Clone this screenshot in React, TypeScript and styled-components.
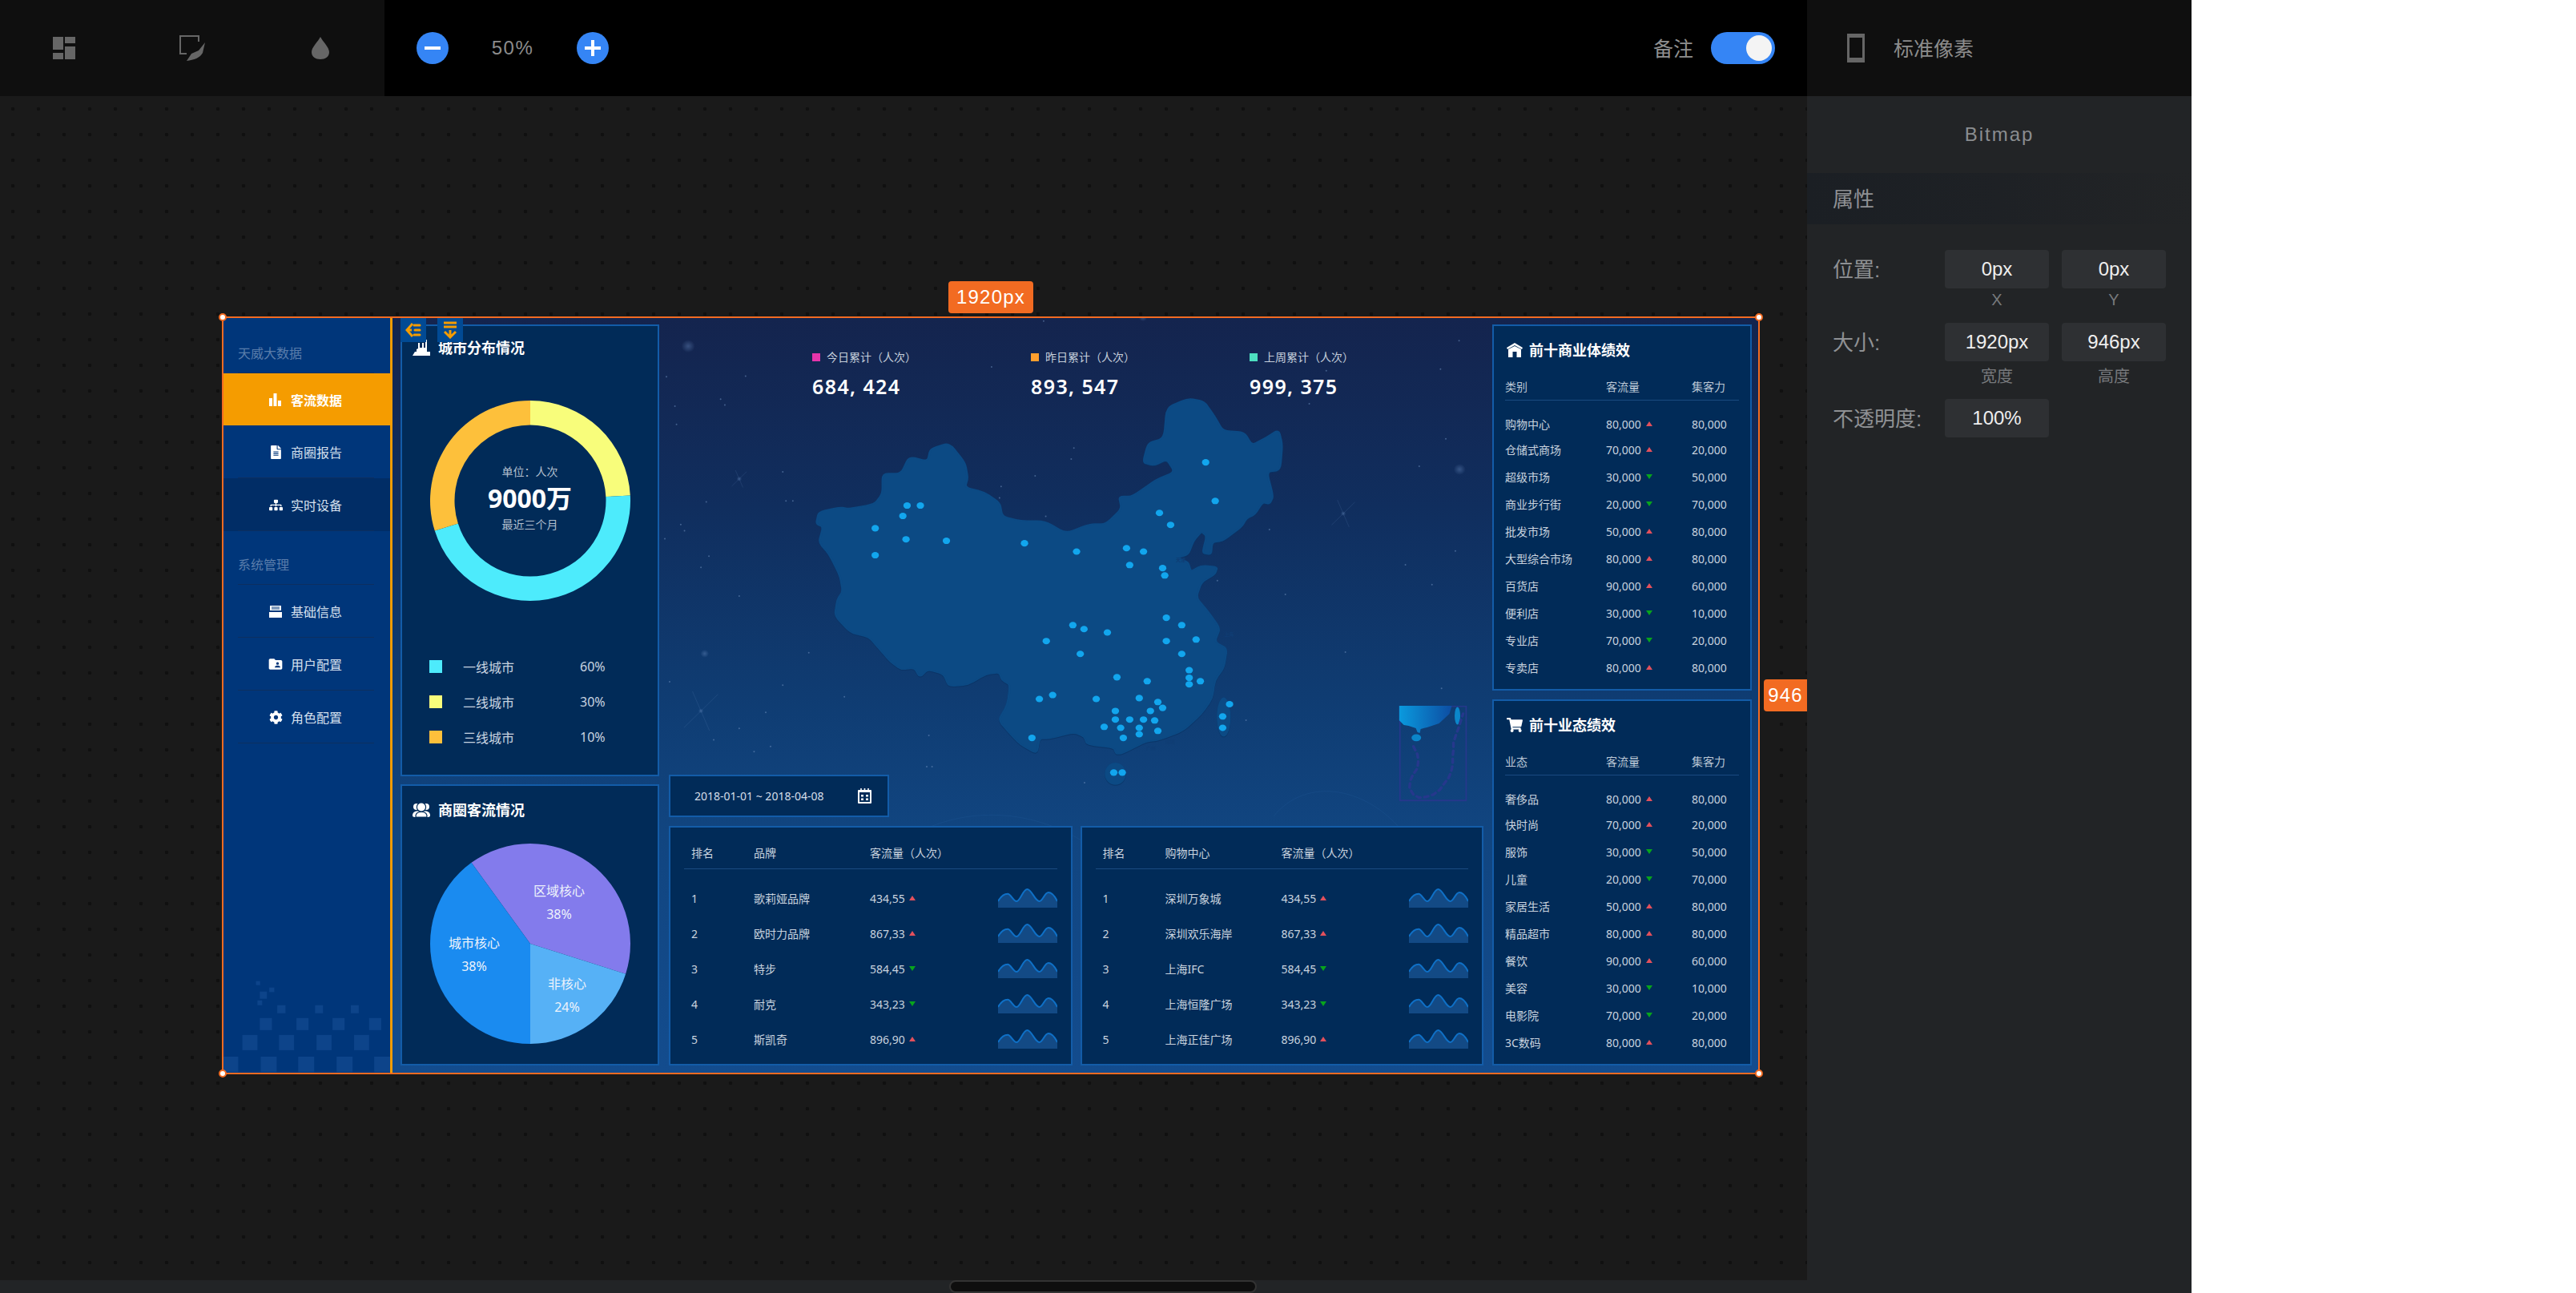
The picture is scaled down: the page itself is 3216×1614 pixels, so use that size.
import React from "react";
import styled, { createGlobalStyle } from "styled-components";
import { FaFileAlt, FaSitemap, FaCog, FaShoppingCart } from "react-icons/fa";
import { MdFolderShared } from "react-icons/md";

const UI_FONT = `"Liberation Sans", "Noto Sans CJK SC", sans-serif`;
const BOARD_FONT = `"Noto Sans", "Noto Sans CJK SC", sans-serif`;
const ORANGE = "#f26b22";
const AMBER = "#f59c00";

const Global = createGlobalStyle`
  html, body { margin: 0; padding: 0; background: #fff; overflow: hidden; }
  * { box-sizing: border-box; }
`;

const Shell = styled.div`
  display: flex;
  width: 2736px;
  height: 1614px;
  font-family: ${UI_FONT};
`;
const LeftCol = styled.div`
  width: 2256px;
  display: flex;
  flex-direction: column;
  background: #222426;
`;
const RightCol = styled.div`
  width: 480px;
  display: flex;
  flex-direction: column;
  background: #222426;
`;
const Topbar = styled.header`
  height: 120px;
  flex: none;
  display: flex;
  background: #000;
`;
const ToolGroup = styled.div`
  width: 480px;
  display: flex;
  background: #0f0f0f;
`;
const ToolSlot = styled.div`
  width: 160px;
  display: flex;
  align-items: center;
  justify-content: center;
  svg { display: block; }
`;
const ZoomGroup = styled.div`
  display: flex;
  align-items: center;
  padding-left: 40px;
`;
const RoundButton = styled.div<{ $plus?: boolean }>`
  width: 40px;
  height: 40px;
  border-radius: 50%;
  background: #3585f5;
  position: relative;
  &::before {
    content: "";
    position: absolute;
    left: 10px;
    top: 18px;
    width: 20px;
    height: 4px;
    background: #fff;
  }
  &::after {
    content: "";
    position: absolute;
    left: 18px;
    top: 10px;
    width: 4px;
    height: 20px;
    background: #fff;
    display: ${(p) => (p.$plus ? "block" : "none")};
  }
`;
const ZoomValue = styled.div`
  width: 160px;
  text-align: center;
  font-size: 24px;
  letter-spacing: 1.5px;
  color: #8c8c8c;
`;
const NoteGroup = styled.div`
  margin-left: auto;
  display: flex;
  align-items: center;
  gap: 22px;
  padding-right: 40px;
`;
const NoteLabel = styled.span`
  font-size: 25px;
  color: #8f8f8f;
  padding-bottom: 3px;
`;
const Toggle = styled.div`
  width: 80px;
  height: 40px;
  border-radius: 20px;
  background: #3585f5;
  display: flex;
  align-items: center;
  justify-content: flex-end;
  padding-right: 4px;
`;
const Knob = styled.div`
  width: 32px;
  height: 32px;
  border-radius: 50%;
  background: #f4f4f4;
`;
const Canvas = styled.main`
  height: 1478px;
  flex: none;
  position: relative;
  overflow: hidden;
  background-color: #1a1a1a;
  background-image: radial-gradient(circle at 16px 16px, #101010 0, #101010 2px, transparent 2.6px);
  background-size: 32px 32px;
`;
const ScrollTrack = styled.div`
  flex: 1;
  display: flex;
  padding-left: 1185px;
  align-items: center;
`;
const ScrollThumb = styled.div`
  width: 384px;
  height: 16px;
  border-radius: 8px;
  background: #0e0e0e;
  border: 2px solid #333;
`;
const Stage = styled.section`
  position: absolute;
  left: 277px;
  top: 275px;
  width: 1920px;
  height: 946px;
  border: 2px solid ${ORANGE};
  display: flex;
  font-family: ${BOARD_FONT};
`;
const Handle = styled.span<{ $x: string; $y: string }>`
  position: absolute;
  width: 10px;
  height: 10px;
  border-radius: 50%;
  background: #fff;
  border: 2px solid ${ORANGE};
  z-index: 5;
  ${(p) => p.$x}: -6px;
  ${(p) => p.$y}: -6px;
`;
const SizeTag = styled.div<{ $left: number; $top: number; $w: number; $r: string }>`
  position: absolute;
  z-index: 5;
  left: ${(p) => p.$left}px;
  top: ${(p) => p.$top}px;
  width: ${(p) => p.$w}px;
  height: 40px;
  border-radius: ${(p) => p.$r};
  background: ${ORANGE};
  color: #fff;
  font-family: "Liberation Sans", sans-serif;
  font-size: 24px;
  letter-spacing: 1.2px;
  line-height: 40px;
  text-align: center;
`;
const LayerTag = styled.div<{ $left: number }>`
  position: absolute;
  z-index: 4;
  top: 0;
  left: ${(p) => p.$left}px;
  width: 32px;
  height: 30px;
  background: #014a94;
  display: flex;
  align-items: center;
  justify-content: center;
`;
const Sidebar = styled.nav`
  width: 211px;
  flex: none;
  position: relative;
  background: #00367a;
  border-right: 3px solid ${AMBER};
`;
const SideTitle = styled.div<{ $h: number }>`
  height: ${(p) => p.$h}px;
  display: flex;
  align-items: flex-end;
  padding: 0 0 14px 18px;
  font-size: 16px;
  line-height: 22px;
  color: #5a7dab;
  position: relative;
  &::after {
    content: "";
    position: absolute;
    left: 18px;
    bottom: 0;
    width: 170px;
    height: 1px;
    background: #0d2f5f;
  }
`;
const SideItem = styled.div<{ $active?: boolean; $dark?: boolean; $h?: number }>`
  height: ${(p) => p.$h ?? 66}px;
  display: flex;
  align-items: center;
  gap: 10px;
  padding-left: 56px;
  position: relative;
  font-size: 16px;
  font-weight: ${(p) => (p.$active ? 700 : 400)};
  color: ${(p) => (p.$active ? "#fff" : "#d6e0ee")};
  background: ${(p) => (p.$active ? AMBER : p.$dark ? "#012d66" : "transparent")};
  &::after {
    content: "";
    position: absolute;
    left: 18px;
    bottom: 0;
    width: 170px;
    height: 1px;
    background: #0d2f5f;
    display: ${(p) => (p.$active ? "none" : "block")};
  }
`;
const SideIcon = styled.span`
  width: 18px;
  height: 18px;
  display: flex;
  align-items: center;
  justify-content: center;
  color: #fff;
  font-size: 17px;
`;
const FolderGlyph = styled(MdFolderShared)`
  font-size: 20px;
  flex: none;
`;
const SidePixels = styled.svg`
  position: absolute;
  left: 0;
  bottom: 0;
  width: 208px;
  height: 117px;
`;
const Board = styled.div`
  flex: 1;
  min-width: 0;
  position: relative;
  overflow: hidden;
  background: linear-gradient(180deg, #14244e 0%, #102e5e 25%, #0f3c72 50%, #114580 68%, #134c8e 100%);
  display: grid;
  grid-template-columns: 323px 1017px 324px;
  column-gap: 12px;
  padding: 8px 0 9px 10px;
`;
const Backdrop = styled.svg`
  position: absolute;
  left: 340px;
  top: -7px;
  width: 1040px;
  height: 600px;
  overflow: visible;
`;
const Streaks = styled.svg`
  position: absolute;
  left: 340px;
  bottom: 0;
  width: 1040px;
  height: 360px;
`;
const Column = styled.div<{ $gap: number }>`
  position: relative;
  min-height: 0;
  display: flex;
  flex-direction: column;
  gap: ${(p) => p.$gap}px;
`;
const SideColumn = styled(Column)`
  width: 324px;
  margin-left: -1px;
`;
const Panel = styled.div`
  background: #012b58;
  border: 2px solid #135ca8;
`;
const CityPanel = styled(Panel)`
  height: 564px;
  padding: 15px 0 0;
`;
const MallPanel = styled(Panel)`
  flex: 1;
  padding: 18px 0 0;
`;
const PanelTitle = styled.h2<{ $pad?: number; $gap?: number }>`
  margin: 0;
  display: flex;
  align-items: center;
  gap: ${(p) => p.$gap ?? 10}px;
  padding-left: ${(p) => p.$pad ?? 13}px;
  font-size: 18px;
  line-height: 24px;
  font-weight: 700;
  color: #fff;
  svg { flex: none; display: block; }
`;
const DonutWrap = styled.div`
  position: relative;
  width: 250px;
  height: 250px;
  margin: 54px auto 0;
  svg { display: block; }
`;
const DonutCenter = styled.div`
  position: absolute;
  inset: 0;
  display: flex;
  flex-direction: column;
  align-items: center;
  justify-content: center;
  padding-bottom: 6px;
  color: #b4c0cf;
  font-size: 14px;
  line-height: 20px;
`;
const DonutValue = styled.div`
  font-size: 32px;
  line-height: 40px;
  font-weight: 700;
  color: #fff;
  margin: 3px 0 3px;
`;
const Legend = styled.div`
  margin-top: 60px;
  padding-left: 34px;
`;
const LegendRow = styled.div`
  height: 44px;
  display: flex;
  align-items: center;
  font-size: 16px;
  color: #c9d4e0;
`;
const Swatch = styled.i<{ $c: string }>`
  width: 16px;
  height: 16px;
  margin-right: 26px;
  background: ${(p) => p.$c};
`;
const LegendName = styled.span`
  width: 146px;
`;
const PieBox = styled.div`
  width: 250px;
  margin: 30px auto 0;
  svg { display: block; overflow: visible; }
`;
const PieText = styled.text`
  font-family: ${BOARD_FONT};
  font-size: 16px;
  fill: #eef3fb;
  text-anchor: middle;
  dominant-baseline: central;
`;
const MapTop = styled.div`
  flex: 1;
  min-height: 0;
`;
const Stats = styled.div`
  display: flex;
  padding: 33px 0 0 179px;
`;
const Stat = styled.div`
  width: 273px;
`;
const StatLabel = styled.div`
  display: flex;
  align-items: center;
  gap: 8px;
  font-size: 14px;
  line-height: 16px;
  color: #c6d0dc;
`;
const StatDot = styled.i<{ $c: string }>`
  width: 10px;
  height: 10px;
  background: ${(p) => p.$c};
`;
const StatValue = styled.div`
  margin-top: 12px;
  font-size: 25px;
  line-height: 32px;
  font-weight: 600;
  letter-spacing: 1.4px;
  color: #fff;
`;
const DatePanel = styled(Panel)`
  width: 275px;
  height: 53px;
  flex: none;
  display: flex;
  align-items: center;
  justify-content: space-between;
  padding: 0 20px 0 30px;
  font-size: 14px;
  color: #d6dee8;
  svg { display: block; }
`;
const TableGrid = styled.div`
  height: 299px;
  flex: none;
  display: grid;
  grid-template-columns: 1fr 1fr;
  column-gap: 10px;
`;
const RankPanel = styled(Panel)`
  padding: 21px 17px 0;
`;
const RankRow = styled.div<{ $head?: boolean }>`
  display: grid;
  grid-template-columns: 78px 145px 1fr 74px;
  align-items: center;
  padding-left: 9px;
  height: ${(p) => (p.$head ? "31px" : "44px")};
  font-size: 14px;
  color: #c9d3df;
  ${(p) => (p.$head ? "border-bottom: 1px solid #1a4a80; padding-bottom: 10px; margin-bottom: 14px;" : "")}
`;
const Flow = styled.span`
  display: flex;
  align-items: center;
  gap: 5px;
`;
const Trend = styled.i<{ $up: boolean }>`
  width: 0;
  height: 0;
  border-left: 4.5px solid transparent;
  border-right: 4.5px solid transparent;
  ${(p) => (p.$up ? "border-bottom: 6px solid #e2505c;" : "border-top: 6px solid #08a41c;")}
`;
const Spark = styled.svg`
  width: 74px;
  height: 24px;
  display: block;
`;
const TopPanel = styled(Panel)`
  height: 457px;
  padding: 18px 14px 0;
`;
const TopHead = styled.div`
  display: grid;
  grid-template-columns: 126px 107px 1fr;
  align-items: center;
  height: 27px;
  margin-top: 24px;
  padding-bottom: 7px;
  border-bottom: 1px solid #1a4a80;
  margin-bottom: 14px;
  font-size: 14px;
  line-height: 20px;
  color: #bcc8d6;
`;
const TopRow = styled.div`
  display: grid;
  grid-template-columns: 126px 107px 1fr;
  align-items: center;
  height: 34px;
  font-size: 14px;
  color: #c9d3df;
  &:nth-of-type(2) { height: 30px; }
`;
const TopFlow = styled(Flow)`
  gap: 6px;
`;
const RightHead = styled.div`
  height: 120px;
  flex: none;
  background: #0f0f0f;
  display: flex;
  align-items: center;
  padding-left: 50px;
  gap: 36px;
  color: #8c8c8c;
  font-size: 25px;
  svg { display: block; }
`;
const HeadText = styled.span`
  padding-bottom: 3px;
`;
const Bitmap = styled.div`
  height: 96px;
  flex: none;
  display: flex;
  align-items: center;
  justify-content: center;
  font-size: 24px;
  letter-spacing: 2px;
  color: #8a8d90;
`;
const SectionBar = styled.div`
  height: 64px;
  flex: none;
  display: flex;
  align-items: center;
  padding: 0 0 3px 32px;
  font-size: 26px;
  color: #8f9194;
  background: linear-gradient(90deg, #1b1f24 0%, #1e2125 50%, #222426 100%);
`;
const Props = styled.div`
  padding: 32px 32px 0;
`;
const PropRow = styled.div`
  display: grid;
  column-gap: 16px;
  width: 432px;
  grid-template-columns: 124px 130px 130px;
  align-items: center;
`;
const PropLabel = styled.div`
  font-size: 26px;
  color: #8f9194;
  white-space: nowrap;
  padding-bottom: 3px;
`;
const PropField = styled.div`
  height: 48px;
  border-radius: 4px;
  background: #2e3033;
  color: #eee;
  font-size: 24px;
  line-height: 48px;
  text-align: center;
`;
const SubRow = styled(PropRow)<{ $after: number; $before: number }>`
  margin-top: ${(p) => p.$before}px;
  margin-bottom: ${(p) => p.$after}px;
`;
const SubLabel = styled.div`
  font-size: 20px;
  line-height: 28px;
  color: #77797c;
  text-align: center;
`;

function polar(cx: number, cy: number, r: number, deg: number) {
  const a = (deg * Math.PI) / 180;
  return [cx + r * Math.sin(a), cy - r * Math.cos(a)];
}
function ring(cx: number, cy: number, r1: number, r0: number, a0: number, a1: number) {
  const large = a1 - a0 > 180 ? 1 : 0;
  const [x0, y0] = polar(cx, cy, r1, a0);
  const [x1, y1] = polar(cx, cy, r1, a1);
  if (r0 === 0) return `M${cx} ${cy}L${x0} ${y0}A${r1} ${r1} 0 ${large} 1 ${x1} ${y1}Z`;
  const [x2, y2] = polar(cx, cy, r0, a1);
  const [x3, y3] = polar(cx, cy, r0, a0);
  return `M${x0} ${y0}A${r1} ${r1} 0 ${large} 1 ${x1} ${y1}L${x2} ${y2}A${r0} ${r0} 0 ${large} 0 ${x3} ${y3}Z`;
}

const CHINA =
  "985,280 1015,290 1035,340 1050,385 1090,390 1105,432 1130,410 1155,382 1162,430 1158,515 1133,520 1145,600 1138,625 1125,620 1110,660 1095,672 1085,700 1050,745 1030,750 1028,790 1012,785 1020,730 1010,715 995,745 985,790 965,800 985,815 990,845 1010,825 1040,830 1035,855 1010,880 1000,930 1020,970 1045,1030 1035,1075 1058,1095 1052,1160 1035,1200 1030,1260 1010,1310 975,1365 930,1395 905,1400 860,1440 850,1440 845,1420 795,1410 790,1385 770,1370 725,1390 705,1390 700,1440 670,1410 650,1375 628,1330 645,1280 650,1215 635,1200 630,1175 605,1180 570,1215 535,1220 525,1180 495,1165 480,1190 470,1160 445,1165 425,1140 405,1100 385,1060 350,1045 320,990 325,935 335,910 330,860 310,790 290,750 298,700 285,690 290,650 330,635 345,640 395,625 410,590 410,525 445,525 460,470 495,485 500,445 535,425 565,490 570,540 565,570 600,585 630,620 635,665 670,680 715,680 755,720 800,690 830,690 860,640 855,600 880,600 925,545 960,520 945,480 920,500 900,490 910,425 940,410 945,310";

function roundedOutline(src: string, k = 0.3) {
  const pts = src.split(" ").map((s) => s.split(",").map(Number));
  const lerp = (a: number[], b: number[], t: number) => [a[0] + (b[0] - a[0]) * t, a[1] + (b[1] - a[1]) * t];
  let d = "";
  pts.forEach((p, i) => {
    const prev = pts[(i - 1 + pts.length) % pts.length];
    const next = pts[(i + 1) % pts.length];
    const a = lerp(p, prev, k);
    const b = lerp(p, next, k);
    d += `${i === 0 ? "M" : "L"}${a[0]} ${a[1]}Q${p[0]} ${p[1]} ${b[0]} ${b[1]}`;
  });
  return d + "Z";
}

const CITY_DOTS: [number, number][] = [
  [1018,489],[1036,615],[931,654],[952,693],[456,630],[481,630],[448,664],[396,704],[454,740],[530,745],[396,792],[677,753],[775,780],[869,769],[901,780],[875,824],[937,834],[941,858],[944,996],[973,1020],[768,1020],[789,1033],[833,1044],[718,1072],[944,1072],[1000,1067],[782,1114],[973,1114],[987,1167],[987,1192],[1008,1203],[987,1213],[851,1190],[908,1203],[730,1248],[705,1261],[812,1261],[893,1258],[928,1271],[937,1290],[914,1300],[848,1300],[848,1328],[875,1328],[901,1328],[922,1331],[827,1352],[858,1355],[893,1355],[893,1376],[928,1365],[863,1388],[691,1388],[1063,1278],[1050,1318],[1050,1355],[845,1501],[861,1501],
];
const SPECKS: [number, number][] = [
  [713,28],[900,14],[3,210],[152,208],[615,178],[1460,185],[1495,92],[1245,190],[1213,298],[105,283],[113,302],[19,306],[22,365],[222,520],[697,533],[633,568],[228,615],[241,615],[78,618],[30,692],[37,712],[0,738],[83,795],[68,832],[140,925],[1138,708],[1470,412],[1420,502],[1488,778],[1394,823],[1444,888],[1168,920],[1040,875],[1281,1108],[1094,1330],[1462,1226],[271,1110],[9,1205],[222,1216],[338,1254],[190,1305],[140,1357],[497,1380],[493,1482],[503,1482],[199,1416],[168,1433],[92,1394],[790,1534],[717,665],[630,605],[765,478],[770,442],
];
const GLOWS: [number, number, number][] = [[44,110,8],[1496,512,7],[75,1113,5],[900,16,5]];
const SPARKS: [number, number, number][] = [[140,543,14],[1277,656,22],[68,1300,32]];
const PIXELS: number[][] = [
  [50,1080,50,58],[176,1080,54,58],[303,1080,54,58],[433,1080,54,58],[560,1080,54,58],
  [114,999,51,57],[238,999,51,57],[365,999,51,57],[492,999,51,57],
  [173,936,41,45],[297,936,41,45],[419,936,41,45],[543,936,41,45],
  [232,888,28,30],[360,888,27,30],[481,888,27,30],
  [160,798,14,15],[205,822,17,17],[173,837,24,27],[165,870,16,18],
];
const MAP_LABELS: [string, number, number][] = [["天津",972,812],["上海",1063,1056],["台北",1083,1276],["广州",916,1428],["深圳",952,1406]];

const MapLabel = styled.text`
  font-family: ${BOARD_FONT};
  font-size: 6px;
  font-weight: 700;
  fill: #0f3d74;
`;

const SparkLine = () => (
  <Spark viewBox="0 0 74 24">
    <path
      d="M0 16C4 9 8 6.7 12 6.7C16 6.7 19 16 23 16C28 16 31 1 36.5 1C42 1 46 16 51.7 16C56 16 58 5 63 5C68 5 71 10 74 16V24H0Z"
      fill="#134a85"
    />
    <path
      d="M0 16C4 9 8 6.7 12 6.7C16 6.7 19 16 23 16C28 16 31 1 36.5 1C42 1 46 16 51.7 16C56 16 58 5 63 5C68 5 71 10 74 16"
      fill="none"
      stroke="#0f70c6"
      strokeWidth="2"
    />
  </Spark>
);

const BRANDS: [string, string, boolean][] = [
  ["歌莉娅品牌", "434,55", true],
  ["欧时力品牌", "867,33", true],
  ["特步", "584,45", false],
  ["耐克", "343,23", false],
  ["斯凯奇", "896,90", true],
];
const MALLS = ["深圳万象城", "深圳欢乐海岸", "上海IFC", "上海恒隆广场", "上海正佳广场"];

const NUMBERS: [string, boolean, string][] = [
  ["80,000", true, "80,000"],
  ["70,000", true, "20,000"],
  ["30,000", false, "50,000"],
  ["20,000", false, "70,000"],
  ["50,000", true, "80,000"],
  ["80,000", true, "80,000"],
  ["90,000", true, "60,000"],
  ["30,000", false, "10,000"],
  ["70,000", false, "20,000"],
  ["80,000", true, "80,000"],
];
const VENUES = ["购物中心", "仓储式商场", "超级市场", "商业步行街", "批发市场", "大型综合市场", "百货店", "便利店", "专业店", "专卖店"];
const FORMATS = ["奢侈品", "快时尚", "服饰", "儿童", "家居生活", "精品超市", "餐饮", "美容", "电影院", "3C数码"];

const RankTable = ({ col, names }: { col: string; names: string[] }) => (
  <RankPanel>
    <RankRow $head>
      <span>排名</span>
      <span>{col}</span>
      <span>客流量（人次）</span>
      <span />
    </RankRow>
    {names.map((n, i) => (
      <RankRow key={n}>
        <span>{i + 1}</span>
        <span>{n}</span>
        <Flow>
          {BRANDS[i][1]}
          <Trend $up={BRANDS[i][2]} />
        </Flow>
        <SparkLine />
      </RankRow>
    ))}
  </RankPanel>
);

const TopTable = ({ icon, title, col, names }: { icon: React.ReactNode; title: string; col: string; names: string[] }) => (
  <TopPanel>
    <PanelTitle $pad={2} $gap={8}>
      {icon}
      {title}
    </PanelTitle>
    <TopHead>
      <span>{col}</span>
      <span>客流量</span>
      <span>集客力</span>
    </TopHead>
    {names.map((n, i) => (
      <TopRow key={n}>
        <span>{n}</span>
        <TopFlow>
          {NUMBERS[i][0]}
          <Trend $up={NUMBERS[i][1]} />
        </TopFlow>
        <span>{NUMBERS[i][2]}</span>
      </TopRow>
    ))}
  </TopPanel>
);

export default function App() {
  return (
    <Shell>
      <Global />
      <LeftCol>
        <Topbar>
          <ToolGroup>
            <ToolSlot>
              <svg width="28" height="28" viewBox="0 0 28 28" fill="#666">
                <rect x="0" y="0" width="13" height="16" />
                <rect x="15" y="0" width="13" height="8" />
                <rect x="0" y="20" width="13" height="8" />
                <rect x="15" y="12" width="13" height="16" />
              </svg>
            </ToolSlot>
            <ToolSlot>
              <svg width="32" height="32" viewBox="0 0 32 32">
                <path d="M24 8V1H1V23H9" fill="none" stroke="#666" strokeWidth="2" />
                <path d="M32 9L29 22C26 28 18 31 9 32L15 23L24 19Z" fill="#666" />
              </svg>
            </ToolSlot>
            <ToolSlot>
              <svg width="22" height="28" viewBox="0 0 22 28">
                <path d="M11 0C8 6 0 13 0 19C0 25 5 28 11 28C17 28 22 25 22 19C22 13 14 6 11 0Z" fill="#666" />
              </svg>
            </ToolSlot>
          </ToolGroup>
          <ZoomGroup>
            <RoundButton />
            <ZoomValue>50%</ZoomValue>
            <RoundButton $plus />
          </ZoomGroup>
          <NoteGroup>
            <NoteLabel>备注</NoteLabel>
            <Toggle>
              <Knob />
            </Toggle>
          </NoteGroup>
        </Topbar>
        <Canvas>
          <Stage>
            <Handle $x="left" $y="top" />
            <Handle $x="right" $y="top" />
            <Handle $x="left" $y="bottom" />
            <Handle $x="right" $y="bottom" />
            <SizeTag $left={905} $top={-46} $w={106} $r="4px">1920px</SizeTag>
            <SizeTag $left={1923} $top={451} $w={54} $r="4px 0 0 4px">946</SizeTag>
            <LayerTag $left={221}>
              <svg width="20" height="20" viewBox="0 0 20 20" fill="none" stroke={AMBER} strokeWidth="3">
                <path d="M9 2L2 10L9 18M2 10H8" />
                <path d="M11 4H18M12 10H18M11 16H18" strokeLinecap="round" />
              </svg>
            </LayerTag>
            <LayerTag $left={267}>
              <svg width="20" height="22" viewBox="0 0 20 22" fill="none" stroke={AMBER} strokeWidth="3">
                <path d="M2 2H18M2 7H18" />
                <path d="M3 13L10 20L17 13M10 20V11" />
              </svg>
            </LayerTag>
            <Sidebar>
              <SideTitle $h={69}>天威大数据</SideTitle>
              <SideItem $active $h={65}>
                <SideIcon>
                  <svg width="16" height="16" viewBox="0 0 16 16" fill="#fff">
                    <rect x="0" y="6" width="4" height="10" />
                    <rect x="5.5" y="0" width="4" height="16" />
                    <rect x="11" y="9" width="4" height="7" />
                  </svg>
                </SideIcon>
                客流数据
              </SideItem>
              <SideItem>
                <SideIcon><FaFileAlt /></SideIcon>
                商圈报告
              </SideItem>
              <SideItem $dark>
                <SideIcon><FaSitemap /></SideIcon>
                实时设备
              </SideItem>
              <SideTitle $h={67}>系统管理</SideTitle>
              <SideItem>
                <SideIcon>
                  <svg width="16" height="15" viewBox="0 0 16 15" fill="#fff">
                    <path d="M1 0H15V6H1ZM0 8H16V15H0Z" fillRule="evenodd" />
                    <path d="M3 2H13M3 4H13" stroke="#00367a" strokeWidth="1" />
                  </svg>
                </SideIcon>
                基础信息
              </SideItem>
              <SideItem>
                <SideIcon><FolderGlyph /></SideIcon>
                用户配置
              </SideItem>
              <SideItem>
                <SideIcon><FaCog /></SideIcon>
                角色配置
              </SideItem>
              <SidePixels viewBox="50 790 564 350" preserveAspectRatio="none">
                {PIXELS.map(([x, y, w, h]) => (
                  <rect key={`${x}-${y}`} x={x} y={y} width={w} height={h} fill="#0d448a" />
                ))}
              </SidePixels>
            </Sidebar>
            <Board>
              <Streaks viewBox="0 0 1040 360" fill="none">
                <path d="M250 120C300 40 420 10 520 70" stroke="#2a62a4" strokeOpacity=".2" />
                <path d="M760 40C800 -10 880 0 930 70" stroke="#2a62a4" strokeOpacity=".2" />
              </Streaks>
              <Backdrop viewBox="0 0 1568 1568" preserveAspectRatio="none">
                <defs>
                  <radialGradient id="glow">
                    <stop offset="0" stopColor="#6d90c4" stopOpacity=".4" />
                    <stop offset="1" stopColor="#6d90c4" stopOpacity="0" />
                  </radialGradient>
                  <linearGradient id="inset" x1="0" y1="0" x2="1" y2="0">
                    <stop offset="0" stopColor="#0a9ade" />
                    <stop offset="1" stopColor="#0d4da2" />
                  </linearGradient>
                </defs>
                {SPECKS.map(([x, y]) => (
                  <ellipse key={`${x}-${y}`} cx={x} cy={y} rx="1.5" ry="2.6" fill="#6f8fbd" fillOpacity=".55" />
                ))}
                {GLOWS.map(([x, y, r]) => (
                  <ellipse key={`${x}-${y}`} cx={x} cy={y} rx={r * 1.6} ry={r * 2.6} fill="url(#glow)" />
                ))}
                {SPARKS.map(([x, y, r]) => (
                  <g key={`${x}-${y}`} stroke="#6f93c6" strokeOpacity=".3" fill="none">
                    <path d={`M${x - r} ${y + r * 1.7}L${x + r} ${y - r * 1.7}M${x - r * 0.5} ${y - r * 2}L${x + r * 0.5} ${y + r * 2}`} />
                    <ellipse cx={x} cy={y} rx="5" ry="8" fill="url(#glow)" stroke="none" />
                  </g>
                ))}
                <g style={{ filter: "drop-shadow(0 2px 1px #0a3263)" }}>
                  <path d={roundedOutline(CHINA)} fill="#0c4a84" stroke="#0c4a84" strokeWidth="4" strokeLinejoin="round" />
                  <ellipse cx="1052" cy="1320" rx="13" ry="64" fill="#0c4a84" />
                  <ellipse cx="848" cy="1505" rx="20" ry="36" fill="#0c4a84" />
                </g>
                {MAP_LABELS.map(([t, x, y]) => (
                  <MapLabel key={t} transform={`translate(${x - 10} ${y}) scale(1.5 2.6)`}>{t}</MapLabel>
                ))}
                {CITY_DOTS.map(([x, y]) => (
                  <ellipse key={`${x}-${y}`} cx={x} cy={y} rx="7" ry="10.5" fill="#12a6ee" />
                ))}
                <svg x="1382" y="1283" width="128" height="313" viewBox="0 0 85 120" preserveAspectRatio="none">
                  <rect x="1" y="0.5" width="83" height="118" fill="none" stroke="#26388c" strokeWidth="2" />
                  <path d="M0 0H66L63 10L50 22L35 27L27 29L26 34L23 33L21 28L12 25L6 24L0 18Z" fill="url(#inset)" />
                  <ellipse cx="21.6" cy="40" rx="6" ry="4.5" fill="#0b86ca" />
                  <ellipse cx="73" cy="12.6" rx="3.5" ry="11" fill="#0b86ca" />
                  <path
                    d="M18 51L23 61L24 69L23 78L17 87L14 94L13 103L18 111L25 115L34 114L43 111L51 105L56 98L62 90L65 83L67 74L67 64L68 55L68 46L71 37L74 29L80 10"
                    fill="none"
                    stroke="#26388c"
                    strokeWidth="3.4"
                    strokeDasharray="5 5"
                    strokeLinecap="round"
                  />
                </svg>
              </Backdrop>
              <Column $gap={10}>
                <CityPanel>
                  <PanelTitle>
                    <svg width="22" height="20" viewBox="0 0 22 20" fill="#fff">
                      <path d="M0 20L3 15H5V12L7 11V4H9V10H12V4H14V10H16V0H18V15H22V20Z" />
                    </svg>
                    城市分布情况
                  </PanelTitle>
                  <DonutWrap>
                    <svg width="250" height="250" viewBox="0 0 250 250">
                      <path d={ring(125, 125, 125, 94.5, 0, 87)} fill="#f8fd7b" />
                      <path d={ring(125, 125, 125, 94.5, 87, 252.5)} fill="#4debfc" />
                      <path d={ring(125, 125, 125, 94.5, 252.5, 360)} fill="#fdc03b" />
                    </svg>
                    <DonutCenter>
                      <span>单位：人次</span>
                      <DonutValue>9000万</DonutValue>
                      <span>最近三个月</span>
                    </DonutCenter>
                  </DonutWrap>
                  <Legend>
                    <LegendRow><Swatch $c="#4debfc" /><LegendName>一线城市</LegendName>60%</LegendRow>
                    <LegendRow><Swatch $c="#f8fd7b" /><LegendName>二线城市</LegendName>30%</LegendRow>
                    <LegendRow><Swatch $c="#fdc03b" /><LegendName>三线城市</LegendName>10%</LegendRow>
                  </Legend>
                </CityPanel>
                <MallPanel>
                  <PanelTitle>
                    <svg width="22" height="18" viewBox="0 0 22 18" fill="#fff">
                      <circle cx="5" cy="5" r="4" />
                      <circle cx="17" cy="5" r="4" />
                      <path d="M0 16C0 12 3 10.5 6 10.5H16C19 10.5 22 12 22 16C22 17 21 18 19 18H3C1 18 0 17 0 16Z" />
                      <circle cx="11" cy="5.5" r="5.6" stroke="#012b58" strokeWidth="1.2" />
                      <path d="M4 17C4 13 7 11.5 11 11.5C15 11.5 18 13 18 17C18 17.6 17.5 18 17 18H5C4.5 18 4 17.6 4 17Z" stroke="#012b58" strokeWidth="1.2" />
                    </svg>
                    商圈客流情况
                  </PanelTitle>
                  <PieBox>
                    <svg width="250" height="250" viewBox="0 0 250 250">
                      <path d={ring(125, 125, 125, 0, 324, 467.6)} fill="#837bec" />
                      <path d={ring(125, 125, 125, 0, 107.6, 180)} fill="#56b1f6" />
                      <path d={ring(125, 125, 125, 0, 180, 324)} fill="#1a8bf0" />
                      <PieText x="161" y="59">区域核心</PieText>
                      <PieText x="161" y="88">38%</PieText>
                      <PieText x="55" y="124">城市核心</PieText>
                      <PieText x="55" y="153">38%</PieText>
                      <PieText x="171" y="175">非核心</PieText>
                      <PieText x="171" y="204">24%</PieText>
                    </svg>
                  </PieBox>
                </MallPanel>
              </Column>
              <Column $gap={11}>
                <MapTop>
                  <Stats>
                    <Stat>
                      <StatLabel><StatDot $c="#e535ab" />今日累计（人次）</StatLabel>
                      <StatValue>684, 424</StatValue>
                    </Stat>
                    <Stat>
                      <StatLabel><StatDot $c="#ff9f2e" />昨日累计（人次）</StatLabel>
                      <StatValue>893, 547</StatValue>
                    </Stat>
                    <Stat>
                      <StatLabel><StatDot $c="#4ddfc0" />上周累计（人次）</StatLabel>
                      <StatValue>999, 375</StatValue>
                    </Stat>
                  </Stats>
                </MapTop>
                <DatePanel>
                  2018-01-01 ~ 2018-04-08
                  <svg width="17" height="19" viewBox="0 0 17 19">
                    <path d="M1 2H16A1 1 0 0 1 17 3V18A1 1 0 0 1 16 19H1A1 1 0 0 1 0 18V3A1 1 0 0 1 1 2Z" fill="#fff" />
                    <rect x="2" y="5" width="13" height="12" fill="#012b58" />
                    <path d="M4 0V4M8.5 0V4M13 0V4" stroke="#fff" strokeWidth="1.6" />
                    <path d="M4 8H7V10.5H4ZM10 8H13V10.5H10ZM4 12.5H7V15H4ZM10 12.5H13V15H10Z" fill="#fff" />
                  </svg>
                </DatePanel>
                <TableGrid>
                  <RankTable col="品牌" names={BRANDS.map((b) => b[0])} />
                  <RankTable col="购物中心" names={MALLS} />
                </TableGrid>
              </Column>
              <SideColumn $gap={11}>
                <TopTable
                  title="前十商业体绩效"
                  col="类别"
                  names={VENUES}
                  icon={
                    <svg width="20" height="18" viewBox="0 0 20 18" fill="#fff">
                      <path d="M10 0L20 6L19 8L10 3L1 8L0 6Z" />
                      <path d="M2 8L10 4L18 8V18H12.5V11H7.5V18H2Z" />
                    </svg>
                  }
                />
                <TopTable
                  title="前十业态绩效"
                  col="业态"
                  names={FORMATS}
                  icon={<FaShoppingCart size={20} />}
                />
              </SideColumn>
            </Board>
          </Stage>
        </Canvas>
        <ScrollTrack>
          <ScrollThumb />
        </ScrollTrack>
      </LeftCol>
      <RightCol>
        <RightHead>
          <svg width="22" height="36" viewBox="0 0 22 36">
            <rect x="1.5" y="1.5" width="19" height="33" fill="none" stroke="#666" strokeWidth="3" />
            <rect x="0" y="0" width="22" height="5" fill="#666" />
            <rect x="0" y="30" width="22" height="6" fill="#666" />
          </svg>
          <HeadText>标准像素</HeadText>
        </RightHead>
        <Bitmap>Bitmap</Bitmap>
        <SectionBar>属性</SectionBar>
        <Props>
          <PropRow>
            <PropLabel>位置:</PropLabel>
            <PropField>0px</PropField>
            <PropField>0px</PropField>
          </PropRow>
          <SubRow $before={0} $after={15}>
            <span />
            <SubLabel>X</SubLabel>
            <SubLabel>Y</SubLabel>
          </SubRow>
          <PropRow>
            <PropLabel>大小:</PropLabel>
            <PropField>1920px</PropField>
            <PropField>946px</PropField>
          </PropRow>
          <SubRow $before={5} $after={14}>
            <span />
            <SubLabel>宽度</SubLabel>
            <SubLabel>高度</SubLabel>
          </SubRow>
          <PropRow>
            <PropLabel>不透明度:</PropLabel>
            <PropField>100%</PropField>
          </PropRow>
        </Props>
      </RightCol>
    </Shell>
  );
}
